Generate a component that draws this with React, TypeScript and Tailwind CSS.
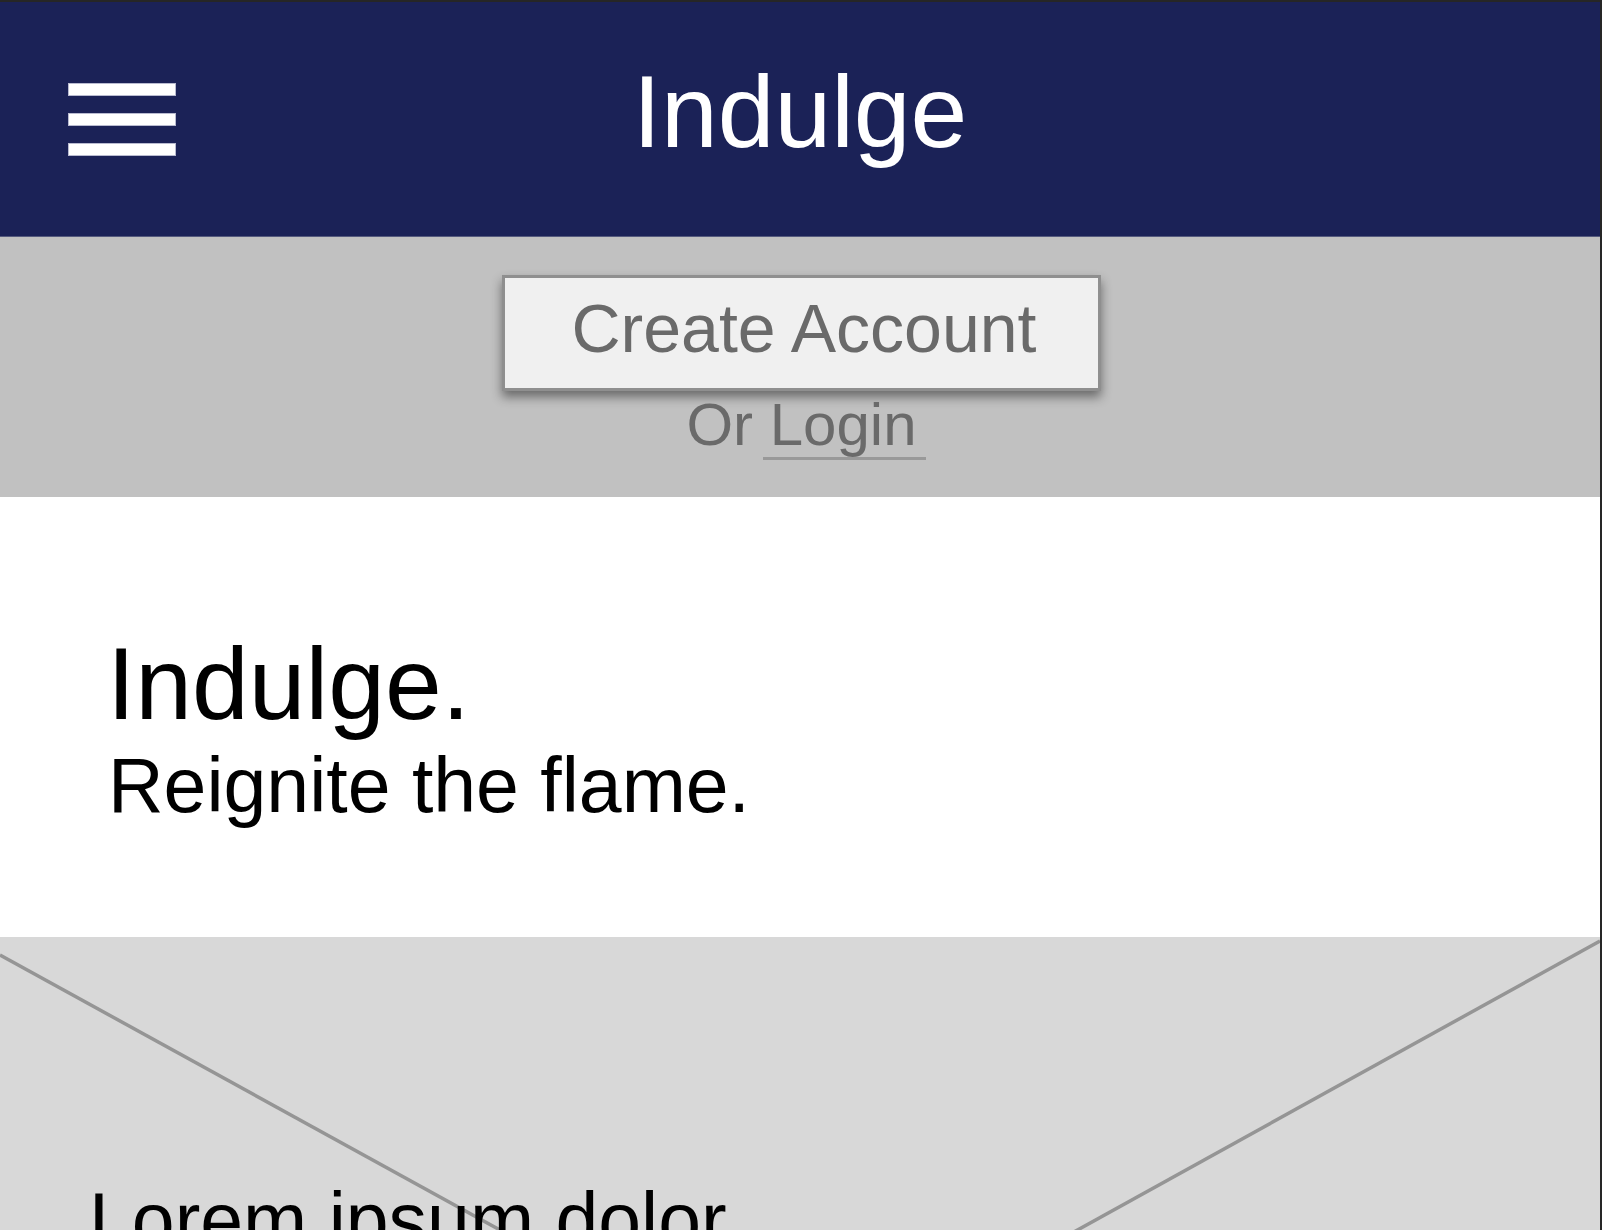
const font = "font-['Liberation_Sans',Arial,sans-serif]";

function MenuIcon() {
  return (
    <div className="flex flex-col gap-[17px]">
      <div className="h-[13px] w-[108px] border border-[#b9bbd0] bg-white" />
      <div className="h-[13px] w-[108px] border border-[#b9bbd0] bg-white" />
      <div className="h-[13px] w-[108px] border border-[#b9bbd0] bg-white" />
    </div>
  );
}

export default function App() {
  return (
    <div className={`flex h-[1230px] w-[1602px] flex-col overflow-hidden bg-[#262626] ${font}`}>
      {/* window top edge */}
      <div className="h-[2px] shrink-0 bg-[#262626]" />

      <div className="flex min-h-0 flex-1">
        <main className="flex w-[1600px] flex-col">
          {/* Header */}
          <header className="grid h-[235px] shrink-0 grid-cols-[1fr_auto_1fr] border-b border-[#555a7e] bg-[#1b2257]">
            <div className="pl-[68px] pt-[81px]">
              <MenuIcon />
            </div>
            <h1 className="pt-[59px] text-[102px] leading-[102px] text-white">Indulge</h1>
            <div />
          </header>

          {/* Sign up band */}
          <section className="flex h-[260px] shrink-0 flex-col items-center bg-[#c1c1c1] pt-[38px]">
            <div className="ml-[2px] h-[116px] w-[599px] cursor-pointer border-[3px] border-[#8f8f8f] bg-[#f0f0f0] pl-[6px] pt-[16px] text-center text-[68px] leading-[68px] text-[#6a6a6a] shadow-[0_6px_10px_rgba(0,0,0,0.45)]">
              Create Account
            </div>
            <p className="ml-[12px] mt-[4px] text-[60px] leading-[60px] text-[#6a6a6a]">
              Or{' '}
              <span className="ml-[-7px] inline-block border-b-[3px] border-[#999999] pb-[2px] pl-[7px] pr-[9px]">Login</span>
            </p>
          </section>

          {/* Hero */}
          <section className="h-[440px] shrink-0 bg-white pt-[136px] text-black">
            <h2 className="pl-[107px] text-[102px] leading-[102px]">Indulge.</h2>
            <p className="mt-[12px] pl-[108px] text-[77px] leading-[77px]">Reignite the flame.</p>
          </section>

          {/* Image placeholder */}
          <section className="relative h-[400px] shrink-0 bg-[#d8d8d8]">
            <svg className="absolute inset-0" width="1600" height="400" viewBox="0 0 1600 400">
              <line x1="0" y1="18" x2="1600" y2="898" stroke="#959595" strokeWidth="3.5" />
              <line x1="1600" y1="4" x2="0" y2="889" stroke="#959595" strokeWidth="3.5" />
            </svg>
            <p className="relative pl-[89px] pt-[245px] text-[77px] leading-[77px] text-black">Lorem ipsum dolor</p>
          </section>
        </main>
        <div className="w-[2px] bg-[#262626]" />
      </div>
    </div>
  );
}
